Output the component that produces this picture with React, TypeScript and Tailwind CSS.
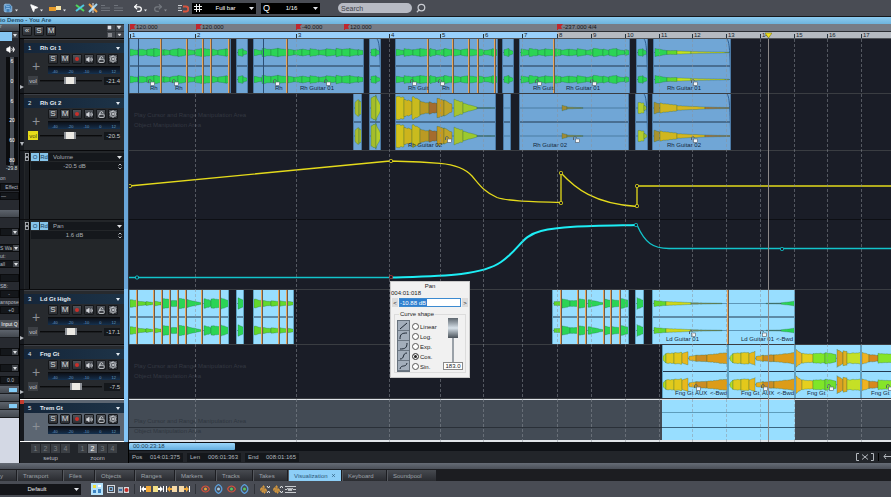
import React from "react";
import { Save, MousePointer2, Undo2, Redo2, Search, Volume2, LockOpen, Settings, X } from "lucide-react";

type Seg = [number, number, number, number, string];
type Label = [number, string];
type Clip = { from: number; to: number; segs?: Seg[]; cuts?: number[]; splits?: number[]; labels?: Label[]; locks?: number[]; fade?: boolean };

const START = 129;
const GREEN = "#2bd455";
const LIME = "#62d82c";
const BARS = [195, 296, 389, 440, 483, 522, 557, 591, 625, 659, 692, 726, 760, 794, 827, 861];

const noise = (n: number) => {
  const v = Math.sin(n * 12.9898) * 43758.5453;
  return v - Math.floor(v);
};

/* A run of short plucked notes filling the given span. */
function plucks(from: number, to: number): Seg[] {
  const out: Seg[] = [];
  const lengths = [8, 9, 7, 10, 6, 8];
  let x = from;
  let i = 0;
  while (x < to) {
    const end = Math.min(to, x + lengths[i % lengths.length]);
    const peak = 3.2 + noise(from + i) * 1.2;
    if (i % 3 === 2) out.push([x, end, peak - 1.2, peak, GREEN]);
    else out.push([x, end, peak, peak - 1.3, GREEN]);
    x = end;
    i++;
  }
  return out;
}

const single = (x: number): Seg[] => [[x, x + 5, 3, 4, GREEN], [x + 5, x + 10, 3, 1, GREEN]];

const fingered = (x: number): Seg[] => [
  [x, x + 3, 2, 5, "#b5dc22"], [x + 3, x + 11, 5, 5.5, "#e0cb1c"], [x + 11, x + 19, 5.5, 6, "#e3c81b"],
  [x + 19, x + 25, 5, 7, "#e8b81c"], [x + 26, x + 33, 2, 3, "#e8ae1c"], [x + 33, x + 44, 3, 3.5, "#cc8d22"],
  [x + 44, x + 66, 3.5, 6, "#dd9c18"],
];

const TRACK1: Clip[] = [
  { from: 129, to: 231, segs: plucks(129, 229), splits: [137], cuts: [160, 186, 202, 210, 228], labels: [[149, "Rh"], [174, "Rh"]], locks: [150, 174] },
  { from: 236, to: 248, segs: single(237) },
  { from: 253, to: 364, segs: plucks(253, 362), splits: [262], cuts: [286], labels: [[274, "Rh"], [299, "Rh Guitar 01"]], locks: [275, 326] },
  { from: 369, to: 381, segs: single(370), fade: true },
  { from: 395, to: 498, segs: plucks(395, 496), cuts: [427, 452, 468, 477, 494], labels: [[407, "Rh Guit"], [441, "Rh"]], locks: [412, 440] },
  { from: 502, to: 514, segs: single(503) },
  { from: 519, to: 630, segs: plucks(520, 628), cuts: [553], labels: [[532, "Rh Guit"], [565, "Rh Guitar 01"]], locks: [537, 592] },
  { from: 636, to: 648, segs: single(637), fade: true },
  { from: 653, to: 731, segs: [[654, 666, 4, 2, GREEN], [666, 676, 2, 2, LIME], [676, 690, 1.6, 1.2, "#c5e31c"], [690, 728, 1, 0.3, "#c9d426"]], labels: [[666, "Rh Guitar 01"]], locks: [693], fade: true },
];

const TRACK2: Clip[] = [
  { from: 353, to: 362, segs: [[354, 358, 6, 9, "#a9bd30"], [358, 362, 8, 5, "#9fb832"]] },
  { from: 369, to: 381, segs: [[370, 375, 10, 13, "#a4bd2c"], [375, 380, 12, 2, "#b3cc2a"]] },
  {
    from: 395, to: 496,
    segs: [[395, 403, 12, 11, "#d2c21c"], [403, 411, 9, 7, "#cdb41d"], [411, 419, 12, 8, "#c9bb1e"], [419, 428, 7, 5, "#bb9a24"], [428, 436, 6, 5, "#a56c2e"], [436, 443, 10, 8, "#c39a22"], [443, 451, 8, 4, "#bfa428"], [453, 462, 9, 6, "#a8c32e"], [462, 476, 5, 1, "#9cc92e"], [476, 495, 0.6, 0.3, "#5d7f8f"]],
    labels: [[407, "Rh Guitar 02"]], locks: [447],
  },
  { from: 503, to: 511 },
  { from: 519, to: 629, segs: [[561, 566, 3, 1.5, "#a08a35"], [566, 582, 1, 0.3, "#8d8a4a"]], labels: [[532, "Rh Guitar 02"]], locks: [575] },
  { from: 635, to: 648, segs: [[637, 643, 6, 5, "#b4cc2e"], [643, 646, 3, 1, "#a3c22e"]], fade: true },
  { from: 652, to: 731, segs: [[653, 659, 6, 4, "#a8922f"], [659, 676, 5, 3, "#d0b61f"], [676, 704, 2.4, 1, "#d4b520"], [704, 730, 1, 0.4, "#a87840"]], labels: [[666, "Rh Guitar 02"]], locks: [693], fade: true },
];

const TRACK3: Clip[] = [
  {
    from: 129, to: 229,
    segs: [[129, 136, 4, 3, LIME], [136, 145, 2.5, 1.5, LIME], [145, 153, 2, 1, LIME], [153, 160, 2.4, 1.5, LIME], [161, 169, 5.5, 4, GREEN], [170, 176, 3, 3, GREEN], [177, 186, 5.5, 4, GREEN], [186, 201, 4, 0.6, GREEN], [203, 210, 5, 3, GREEN], [210, 219, 5, 4, GREEN], [219, 228, 6, 3, GREEN]],
    cuts: [136, 153, 161, 169, 177, 185, 201, 219],
  },
  { from: 236, to: 244, segs: [[237, 243, 6, 3, GREEN]] },
  { from: 253, to: 294, segs: [[253, 261, 4.5, 3, LIME], [262, 270, 3, 2, LIME], [270, 278, 3, 2, LIME], [279, 286, 3, 1.6, LIME], [286, 294, 2.6, 1, LIME]], cuts: [261, 278, 286] },
  {
    from: 552, to: 629,
    segs: [[553, 560, 2, 2, LIME], [561, 569, 5, 3, GREEN], [569, 577, 3, 3, GREEN], [577, 585, 5, 4, GREEN], [587, 602, 4, 0.8, GREEN], [603, 610, 5, 3, GREEN], [610, 619, 4, 3, GREEN], [619, 628, 6, 3, GREEN]],
    cuts: [560, 577, 585, 603, 610, 619],
  },
  { from: 635, to: 644, segs: [[636, 643, 6, 3, GREEN]] },
  {
    from: 652, to: 795,
    segs: [[653, 665, 3, 2, LIME], [665, 690, 2, 1, "#cfd81c"], [690, 721, 0.8, 0.3, "#7d8d60"], [765, 780, 0.3, 0.6, "#4e7a80"], [780, 794, 0.8, 2.4, GREEN]],
    cuts: [727], labels: [[665, "Ld Guitar 01"], [740, "Ld Guitar 01"], [775, "<-Bwd"]], locks: [691, 762],
  },
];

const TRACK4: Clip[] = [
  { from: 662, to: 728, segs: fingered(662), labels: [[674, "Fng Gt"], [694, "AUX"], [709, "<-Bwd"]], locks: [696] },
  { from: 728, to: 795, segs: fingered(729), labels: [[740, "Fng Gt"], [761, "AUX"], [776, "<-Bwd"]], locks: [763] },
  {
    from: 795, to: 861, cuts: [860],
    segs: [[795, 801, 9, 5, "#f0b424"], [801, 812, 5, 4, "#e5cf1e"], [812, 824, 5, 5, "#7fe628"], [824, 835, 6, 4, "#6fe030"], [836, 842, 9, 6, "#dca022"], [842, 846, 8, 7, "#e0b020"], [846, 861, 5, 6, "#c5e026"]],
    labels: [[806, "Fng Gt"]], locks: [829],
  },
  {
    from: 861, to: 928,
    segs: [[861, 868, 6, 4, "#efb222"], [868, 877, 4, 3, "#d8881e"], [877, 900, 5, 4, "#86e42a"], [900, 928, 6, 5, "#dcb022"]],
    labels: [[870, "Fng Gt"]], locks: [888],
  },
];

function Wave({ clip, height }: { clip: Clip; height: number }) {
  const w = clip.to - clip.from;
  return (
    <svg className="absolute inset-0" width={w} height={height}>
      {[height / 4, (height * 3) / 4].map((cy) => (
        <g key={cy}>
          <line x1={0} x2={w} y1={cy} y2={cy} stroke="#24506f" strokeWidth="0.5" />
          {(clip.segs ?? []).map(([a, b, h0, h1, color], i) => {
            const top: string[] = [];
            const bottom: string[] = [];
            for (let x = a; x <= b; x++) {
              const h = (h0 + ((h1 - h0) * (x - a)) / (b - a)) * (0.88 + noise(x) * 0.16);
              top.push(`${x - clip.from},${(cy - h).toFixed(1)}`);
              bottom.unshift(`${x - clip.from},${(cy + h).toFixed(1)}`);
            }
            return <polygon key={i} points={[...top, ...bottom].join(" ")} fill={color} stroke="#1c5c3c" strokeOpacity="0.55" strokeWidth="0.5" />;
          })}
        </g>
      ))}
      <line x1={0} x2={w} y1={height / 2} y2={height / 2} stroke="#22384e" />
      {clip.fade && <path d={`M${w - 5} 0C${w - 2} 3 ${w - 2} 18 ${w - 1} ${height}`} fill="none" stroke="#2f5f92" />}
    </svg>
  );
}

function Lane({ clips, height, light, size, hint }: { clips: Clip[]; height: number; light?: boolean; size: string; hint?: boolean }) {
  return (
    <div className={`relative shrink-0 overflow-hidden border-b border-[#3a3d42] ${size}`}>
      {hint && <Hint color="text-[#343842]" />}
      {clips.map((c) => (
        <div
          key={c.from}
          className={`absolute inset-y-0 overflow-hidden border-x ${light ? "border-[#5fa3c4] bg-[#98deff]" : "border-[#4c7aa5] bg-[#70a6d6]"}`}
          style={{ left: c.from - START, width: c.to - c.from }}
        >
          <Wave clip={c} height={height} />
          {(c.splits ?? []).map((x) => (
            <i key={x} className="absolute inset-y-0 w-px bg-[#2d4f75]" style={{ left: x - c.from }} />
          ))}
          {(c.cuts ?? []).map((x) => (
            <i key={x} className="absolute inset-y-0 w-0.5 border-r border-[#6b5a4c] bg-[#e8a55c]" style={{ left: x - c.from - 1 }} />
          ))}
          {(c.labels ?? []).map(([x, t]) => (
            <span key={x} className="absolute bottom-px text-[6px] leading-[7px] whitespace-nowrap text-[#13283c]" style={{ left: x - c.from }}>{t}</span>
          ))}
          {(c.locks ?? []).map((x) => (
            <svg key={x} className="absolute bottom-[7px]" style={{ left: x - c.from - 3 }} width="7" height="7">
              <path d="M0.5 4V2C0.5 0 3 0 3.5 2" fill="none" stroke="#55606a" />
              <rect x="2.5" y="3" width="4" height="3.5" fill="#f4f6f8" stroke="#4d5a68" strokeWidth="0.6" />
            </svg>
          ))}
        </div>
      ))}
    </div>
  );
}

function Hint({ color }: { color: string }) {
  return (
    <div className={`flex flex-col gap-0.5 px-[5px] pt-[17px] text-[6px] leading-2 ${color}`}>
      <span>Play Cursor and Range Manipulation Area</span>
      <span>Object Manipulation Area</span>
    </div>
  );
}

function Node({ x, y, color }: { x: number; y: number; color: string }) {
  return <rect x={x - START - 1.5} y={y - 1.5} width="3" height="3" rx="1" fill="#1a1d27" stroke={color} />;
}

const mini = "flex h-2.5 w-2.5 items-center justify-center rounded-[1px] border border-[#15171a] bg-linear-to-b from-[#50545a] to-[#2c2f34] text-[8px] leading-none text-[#d5d8dc]";

function TrackHeader({ n, name, volume, pos, size, yellow, selected, open }: { n: number; name: string; volume?: string; pos?: number; size: string; yellow?: boolean; selected?: boolean; open?: boolean }) {
  return (
    <div className={`flex shrink-0 border-b ${size} ${selected ? "border-y border-white" : "border-[#08090b]"}`}>
      <div className="flex w-1 flex-col justify-end bg-[#16191e] pb-1">
        {!selected && (
          <svg width="4" height="4" fill="#b4b8be">{open ? <path d="M0 0H4L2 4Z" /> : <path d="M0 0L4 2L0 4Z" />}</svg>
        )}
        {selected && <i className="mb-auto h-1 w-1 bg-[#c23b2e]" />}
      </div>
      <div className={`flex min-w-0 flex-1 flex-col pt-[3px] ${selected ? "bg-[#5c6672]" : "border-t border-[#3c3f45] bg-[#272a2e]"}`}>
        <div className="flex h-2.5 items-center bg-linear-to-r from-[#15263a] to-[#1d3347] pr-1 pl-1 text-[6px] leading-none text-[#e4ebf2]">
          <span className="w-3">{n}</span>
          <span className="flex-1 font-bold">{name}</span>
          <svg width="4" height="3" fill="#e4ebf2"><path d="M0 0H4L2 3Z" /></svg>
        </div>
        <div className="flex">
          <button aria-label={`Add to ${name}`} className="w-6 pt-1 text-[14px] leading-none text-[#8b9096]">+</button>
          <div className="flex flex-1 flex-col gap-0.5 pt-px pr-1">
            <div className="flex gap-0.5">
              <button className={mini}>S</button>
              <button className={mini}>M</button>
              <button aria-label="Record" className={mini}><i className="h-1 w-1 rounded-full bg-[#c92f2a]" /></button>
              <button aria-label="Monitor" className={mini}><Volume2 size={7} fill="currentColor" /></button>
              <button aria-label="Lock" className={mini}><LockOpen size={7} strokeWidth={3} /></button>
              <button aria-label="Track settings" className={mini}><Settings size={8} strokeWidth={3} /></button>
            </div>
            <div className="flex h-2 items-end justify-between border-t border-[#0a0b0d] bg-linear-to-b from-[#0c1018] to-[#14304e] px-1 text-[4px] leading-[4px] text-[#6b9cc4]">
              <span>-40</span><span>-20</span><span>-10</span><span>0</span><span>12</span>
            </div>
          </div>
        </div>
        {volume && (
          <div className="flex items-center gap-0.5 pt-0.5 pr-1 pl-1 text-[6px] leading-none">
            <button className={`h-[9px] w-2.5 ${yellow ? "bg-[#e6dc1a] text-[#4b4710]" : "bg-[#3c3f44] text-[#c5c8cc]"}`}>vol</button>
            <input
              type="range" aria-label={`${name} volume`} defaultValue={pos}
              className="h-2 min-w-0 flex-1 appearance-none bg-linear-to-b from-transparent from-35% via-black via-36% to-transparent to-65% [&::-webkit-slider-thumb]:h-[7px] [&::-webkit-slider-thumb]:w-3 [&::-webkit-slider-thumb]:appearance-none [&::-webkit-slider-thumb]:border-x-2 [&::-webkit-slider-thumb]:border-[#8d9197] [&::-webkit-slider-thumb]:bg-[#eceae4]"
            />
            <span className="w-4 bg-[#14171b] py-px text-right text-[#c9ccd0]">{volume}</span>
          </div>
        )}
      </div>
    </div>
  );
}

function AutomationHeader({ name, value, size }: { name: string; value: string; size: string }) {
  return (
    <div className={`flex shrink-0 gap-px border-b border-[#0b0c0e] bg-[#232629] text-[6px] leading-none text-[#a9adb3] ${size}`}>
      <div className="w-1 bg-[#16191e]" />
      <div className="w-[5px] border-r border-black bg-[#1b1e22] pt-0.5">
        <svg width="4" height="8" fill="none" stroke="#b9bdc2" strokeWidth="0.8"><rect x="0.5" y="0.5" width="3" height="3" /><rect x="0.5" y="4.5" width="3" height="3" /></svg>
      </div>
      <div className="flex min-w-0 flex-1 flex-col gap-px pt-0.5">
        <div className="flex h-2 gap-px">
          <button className="w-2 bg-[#85c4ea] text-[#17405e]">O</button>
          <button className="w-2 bg-[#85c4ea] text-[#17405e]">Rd</button>
          <div className="flex flex-1 items-center bg-[#15181c] pr-0.5">
            <select aria-label={`${name} lane parameter`} className="min-w-0 flex-1 appearance-none pl-1"><option>{name}</option></select>
            <svg width="5" height="3" fill="#e0e2e5"><path d="M0 0H5L2.5 3Z" /></svg>
          </div>
        </div>
        <div className="flex h-2 items-center bg-[#15181c] pr-0.5">
          <input aria-label={`${name} value`} defaultValue={value} className="min-w-0 flex-1 text-center" />
          <svg width="4" height="7" fill="none" stroke="#b9bdc2"><path d="M0.5 2.5L2 1L3.5 2.5M0.5 4.5L2 6L3.5 4.5" /></svg>
        </div>
      </div>
    </div>
  );
}

const box = "flex h-2 shrink-0 items-center justify-end border border-[#0c0d0f] bg-[#14171b]";
const bar = "h-2 shrink-0 border-b border-[#1a1c20] bg-linear-to-b from-[#5d636c] to-[#43484f]";

function Arrow() {
  return <span className="flex h-1.5 w-1.5 shrink-0 items-center justify-center bg-[#44484e]"><svg width="4" height="3" fill="#e0e2e5"><path d="M0 0H4L2 3Z" /></svg></span>;
}

function Inspector() {
  return (
    <aside className="flex w-5 shrink-0 flex-col overflow-hidden border-r border-black bg-[#272a30] text-[5px] leading-none whitespace-nowrap text-[#b9bdc3]">
      <div className={bar}>r</div>
      <div className="flex h-[9px] shrink-0"><i className="w-3 bg-[#86c6f2]" /><Arrow /></div>
      <div className="flex h-4 shrink-0 items-center justify-end pr-1 text-white"><Volume2 size={9} fill="currentColor" /></div>
      <div className="ml-1.5 flex h-[108px] w-3 shrink-0 flex-col items-center justify-between border-x-4 border-[#0b0c0e] bg-[#4b5058] py-0.5 text-white">
        <span>6</span><span>0</span><span>6</span><span>20</span><span>60</span><span>80</span>
      </div>
      <div className="h-[7px] shrink-0 pt-px pl-1.5 text-[#dfe2e6]">-29.8</div>
      <div className="h-[11px] shrink-0 pt-1">on</div>
      <div className={box}>Effect</div>
      <div className={`${box} mt-px`}><span className="w-full">—</span></div>
      <div className={`${bar} mt-2.5`} />
      <div className={`${box} mt-2.5`}><Arrow /></div>
      <div className="mt-2 flex h-2 shrink-0 items-center justify-between border-y border-[#0c0d0f] bg-[#14171b]">S Wa<Arrow /></div>
      <div className="h-2 shrink-0 pt-0.5">ut:</div>
      <div className="flex h-2 shrink-0 items-center justify-between border-y border-[#0c0d0f] bg-[#14171b]">all<Arrow /></div>
      <div className={`${box} mt-1.5`} />
      <div className="h-2 shrink-0 pt-0.5">SB:</div>
      <div className={`${box} pr-2`}>-</div>
      <div className="h-2 shrink-0 pt-0.5">anspose</div>
      <div className={`${box} pr-1`}>+0</div>
      <button className="mt-1.5 h-2 shrink-0 bg-[#4a4e55] text-white">Input Q</button>
      <div className={`${bar} mt-0.5`} />
      <div className={`${box} mt-2.5`}><Arrow /></div>
      <div className={`${box} mt-2`}><Arrow /></div>
      <div className={`${box} mt-1 pr-1`}>0.0</div>
      <div className={`${bar} mt-0.5 flex items-center justify-end pr-0.5`}><i className="h-1 w-2 bg-[#84ccf6]" /></div>
      <div className={bar} />
      <div className={`${bar} flex items-center justify-end pr-0.5`}><i className="h-1 w-2 bg-[#84ccf6]" /></div>
      <div className={bar} />
      <div className="flex-1 bg-[#d3d8e4]" />
    </aside>
  );
}

function TempoFlag({ x, label }: { x: number; label: string }) {
  return (
    <span className="absolute top-0 flex whitespace-nowrap text-[6px] leading-[7px] text-[#14171b]" style={{ left: x - START }}>
      <svg width="6" height="6"><path d="M0 0H6L4 2.500L5 5H1V6H0Z" fill="#c0272d" /></svg>
      {label}
    </span>
  );
}

const CURVES: [string, string, boolean][] = [
  ["Linear", "M2 8L9 2", false],
  ["Log.", "M2 8C2 3 4 2 9 2", false],
  ["Exp.", "M2 8C7 8 9 7 9 2", false],
  ["Cos.", "M2 8C7 8 4 2 9 2", true],
  ["Sin.", "M2 8C3 3 8 7 9 2", false],
];

function PanDialog() {
  return (
    <div role="dialog" aria-label="Pan" className="absolute top-[257px] left-[261px] z-20 flex h-[97px] w-20 flex-col border border-[#c9c9c9] bg-[#f1f1f1] text-[6px] leading-none text-[#222]">
      <div className="pt-px text-center leading-[7px]">Pan</div>
      <div className="leading-[7px]">004:01:018</div>
      <div className="mt-px flex h-[9px] justify-between gap-px px-px">
        <button aria-label="Decrease" className="w-1.5 bg-[#dcdcdc]">&lt;</button>
        <div className="flex flex-1 border border-[#3c8ad0] bg-white">
          <input aria-label="Pan value" defaultValue="-10.88 dB" className="w-[27px] bg-[#2f7fd0] text-white" />
        </div>
        <button aria-label="Increase" className="w-1.5 bg-[#dcdcdc]">&gt;</button>
      </div>
      <fieldset className="mx-[3px] mt-1 mb-1 flex min-h-0 flex-1 items-start border border-[#dcdcdc] pl-0.5">
        <legend className="ml-0.5 px-px leading-[7px]">Curve shape</legend>
        <div className="mt-0.5 flex flex-col border border-[#66717c]">
          {CURVES.map(([n, d]) => (
            <svg key={n} className="bg-[#a3aebb]" width="11" height="10"><path d={d} fill="none" stroke="#1d2733" /><path d="M0 9.500H11" stroke="#6b7682" /></svg>
          ))}
        </div>
        <div className="flex flex-1 flex-col gap-px pt-1 pl-0.5">
          {CURVES.map(([n, , on]) => (
            <label key={n} className="flex h-[9px] items-center gap-px">
              <input type="radio" name="curve" defaultChecked={on} className="h-[7px] w-[7px] appearance-none rounded-full border border-[#555] bg-white checked:bg-[#222] checked:shadow-[inset_0_0_0_1px_white]" />
              {n}
            </label>
          ))}
        </div>
        <div className="flex h-full w-6 flex-col items-center justify-between pb-1">
          <input
            type="range" aria-label="Curve amount" defaultValue={100}
            className="h-11 w-2.5 appearance-none bg-transparent [direction:rtl] [writing-mode:vertical-lr] [&::-webkit-slider-runnable-track]:bg-[linear-gradient(to_right,transparent_4px,#9aa1a8_4px,#9aa1a8_6px,transparent_6px)] [&::-webkit-slider-thumb]:h-5 [&::-webkit-slider-thumb]:w-2.5 [&::-webkit-slider-thumb]:appearance-none [&::-webkit-slider-thumb]:bg-linear-to-b [&::-webkit-slider-thumb]:from-[#5d666e] [&::-webkit-slider-thumb]:via-[#d8e2ea] [&::-webkit-slider-thumb]:to-[#4a5259]"
          />
          <input aria-label="Curve amount value" defaultValue="183.0" className="h-[9px] w-5 border border-[#8a8a8a] bg-white text-center" />
        </div>
      </fieldset>
    </div>
  );
}

function Timeline() {
  return (
    <section className="relative flex min-w-0 flex-1 flex-col overflow-hidden bg-[#1a1d27]">
      <div className="relative h-2 shrink-0 border-b border-[#2b2e33] bg-[#777c86]">
        <TempoFlag x={130} label="120.000" />
        <TempoFlag x={196} label="120.000" />
        <TempoFlag x={296} label="-40.000" />
        <TempoFlag x={344} label="120.000" />
        <TempoFlag x={557} label="-237.000 4/4" />
      </div>
      <div className="relative h-[7px] shrink-0 border-b border-[#4f5358] bg-[#b5bac1] text-[6px] leading-[7px] text-[#14222e]">
        <i className="absolute inset-y-0 left-0 w-[428px] bg-[#99d0fb]" />
        {[130, ...BARS].map((x, i) => (
          <span key={x} className="absolute top-0 h-full" style={{ left: x - START }}>
            <i className="absolute bottom-0 left-0 h-1 w-px bg-[#25323d]" />
            <span className="pl-0.5">{i + 1}</span>
          </span>
        ))}
        <svg className="absolute top-0 left-[636px] z-20" width="7" height="6"><path d="M0 1H7L3.500 6Z" fill="#efe21c" stroke="#6d6712" strokeWidth="0.5" /></svg>
      </div>
      <Lane clips={TRACK1} height={54} size="h-[55px]" />
      <Lane clips={TRACK2} height={56} size="h-[57px]" hint />
      <div className="h-[69px] shrink-0 border-b border-[#0d0f14]">
        <svg className="h-full w-full overflow-hidden" fill="none" stroke="#e4da1b">
          <g transform="translate(0 -151)">
            <path strokeWidth="1.300" d="M0 186L261 161L291 162L311 163.300C325 164.500 336 168 343 176S354 191 368 197.500C378 201 400 201.500 432 202.500V173C446 188 465 204 508 206.500V186H3000" />
            <Node x={130} y={186} color="#e4da1b" />
            <Node x={391} y={161} color="#e4da1b" />
            <Node x={561} y={203} color="#e4da1b" />
            <Node x={561} y={173} color="#e4da1b" />
            <Node x={637} y={206} color="#e4da1b" />
            <Node x={637} y={186} color="#e4da1b" />
          </g>
        </svg>
      </div>
      <div className="h-[70px] shrink-0 border-b border-[#3a3d42]">
        <svg className="h-full w-full overflow-hidden" fill="none" stroke="#12c4cb">
          <g transform="translate(0 -220)">
            <path strokeWidth="1.300" d="M0 277.500H262M508 225C516 243 524 248.500 540 248.500H3000" />
            <path stroke="#1deef5" strokeWidth="2" d="M262 277.500C310 276 352 276 372 262S392 236 412 231S460 226 508 225" />
            <Node x={137} y={277.5} color="#12c4cb" />
            <Node x={636} y={225} color="#12c4cb" />
            <Node x={782} y={249} color="#12c4cb" />
            <Node x={391} y={277} color="#b92b2b" />
          </g>
        </svg>
      </div>
      <Lane clips={TRACK3} height={54} size="h-[55px]" light />
      <Lane clips={TRACK4} height={53} size="h-[54px]" light hint />
      <div className="relative h-[43px] shrink-0 border-t border-b-2 border-[#dfe3e8] bg-[#434b55]">
        <Hint color="text-[#303740]" />
        <i className="absolute inset-x-0 top-[27px] h-px bg-[#2a3038]" />
        <div className="absolute inset-y-0 w-[133px] bg-[#98deff]" style={{ left: 662 - START }}>
          <i className="absolute inset-x-0 top-3 h-px bg-[#5d9dbb]" />
          <i className="absolute inset-x-0 top-[27px] h-px bg-[#3b6680]" />
        </div>
      </div>
      <div className="pointer-events-none absolute top-[15px] bottom-0 left-0 z-10 w-full">
        {BARS.map((x) => (
          <i key={x} className="absolute inset-y-0 border-l border-dashed border-[#8c929a]/50" style={{ left: x - START }} />
        ))}
        <i className="absolute inset-y-0 w-px bg-[#8e8a8a]" style={{ left: 768 - START }} />
      </div>
      <PanDialog />
    </section>
  );
}

function Digits({ name, active }: { name: string; active?: number }) {
  return (
    <div className="flex flex-col items-center gap-0.5 text-[6px] leading-none text-[#b7bbc0]">
      <div className="flex gap-px">
        {[1, 2, 3, 4].map((n) => (
          <button key={n} className={`h-[9px] w-[9px] text-[7px] ${n === active ? "bg-[#6b7078] text-white" : "bg-[#3b3f44] text-[#767b81]"}`}>{n}</button>
        ))}
      </div>
      {name}
    </div>
  );
}

function Caret({ w = 5 }: { w?: number }) {
  return <svg width={w} height="3" viewBox="0 0 5 3" className="shrink-0" fill="#e4e6ea"><path d="M0 0H5L2.500 3Z" /></svg>;
}

function TopBar() {
  return (
    <header className="flex h-[17px] shrink-0 items-center border-b border-[#16181c] bg-[#494c54] pl-[3px] text-[6px] leading-none text-white">
      <button aria-label="Save" className="text-[#9fc9ee]"><Save size={10} fill="#3f7fb8" /></button>
      <span className="w-4 pt-1 pl-0.5"><Caret w={3} /></span>
      <button aria-label="Pointer"><MousePointer2 size={10} fill="white" /></button>
      <span className="w-2.5 pt-1 pl-px"><Caret w={3} /></span>
      <button aria-label="Draw"><svg width="12" height="10"><path d="M0 4H7V8H0Z" fill="#e79a28" /><path d="M7 3H12V7H7Z" fill="#f6e3a6" /></svg></button>
      <span className="w-3.5 pt-1 pl-0.5"><Caret w={3} /></span>
      <button aria-label="Split" className="w-[13px]"><svg width="10" height="10" strokeWidth="2"><path d="M1 2L9 8" stroke="#4fd65b" /><path d="M1 8L9 2" stroke="#4fc8e0" /></svg></button>
      <button aria-label="Crossfade" className="w-[13px]"><svg width="10" height="10" strokeWidth="2"><path d="M1 1L9 9" stroke="#f0a040" /><path d="M1 9L9 1" stroke="#9fd6f2" /><path d="M5 0V10" stroke="#e8e8e8" strokeWidth="1" /></svg></button>
      {[0, 1].map((i) => (
        <button key={i} aria-label={i ? "Ungroup" : "Group"} className="w-[13px]"><svg width="9" height="10" stroke="#6f737b"><path d="M0 2.500H4M0 5H9M0 7.500H9" /></svg></button>
      ))}
      <button aria-label="Undo" className="ml-1.5"><Undo2 size={10} strokeWidth={3} /></button>
      <span className="w-2.5 pt-1 pl-px"><Caret w={3} /></span>
      <button aria-label="Redo" className="text-[#74787f]"><Redo2 size={10} strokeWidth={3} /></button>
      <span className="w-[15px] pt-1 pl-px opacity-40"><Caret w={3} /></span>
      <button aria-label="Snap" className="mr-[3px]">
        <svg width="11" height="9" fill="none"><path d="M0 1.500H4M0 4H3M0 6.500H4" stroke="#c9ccd0" /><path d="M5 2.500H8C11 2.500 11 7.500 8 7.500H5" stroke="#d8553f" strokeWidth="2" /></svg>
      </button>
      <div className="flex h-[11px] w-16 items-center bg-black px-0.5">
        <svg width="8" height="8" stroke="#f0f0f0"><path d="M2.500 0V8M5.500 0V8M0 2.500H8M0 5.500H8" /></svg>
        <select aria-label="Snap grid" className="min-w-0 flex-1 appearance-none text-center"><option>Full bar</option></select>
        <Caret />
      </div>
      <div className="ml-[5px] flex h-[11px] w-[59px] items-center bg-black px-0.5">
        <span className="text-[9px]">Q</span>
        <select aria-label="Quantize" className="min-w-0 flex-1 appearance-none text-center"><option>1/16</option></select>
        <Caret />
      </div>
      <input type="search" aria-label="Search" placeholder="Search" className="mr-1 ml-[18px] h-2.5 w-[74px] rounded-full bg-[#b7bac3] px-[3px] text-[7px] placeholder:text-[#3e424a]" />
      <button aria-label="Run search" className="text-[#c9ccd2]"><Search size={10} strokeWidth={3} className="-scale-x-100" /></button>
    </header>
  );
}

const TABS: [string, string][] = [
  ["Transport", "w-[45px]"], ["Files", "w-[31px]"], ["Objects", "w-[39px]"], ["Ranges", "w-[39px]"], ["Markers", "w-10"],
  ["Tracks", "w-9"], ["Takes", "w-[34px]"], ["Visualization", "w-[53px]"], ["Keyboard", "w-11"], ["Soundpool", "w-[49px]"],
];

function Sep() {
  return <i className="mx-[3px] h-2.5 w-px bg-[#2f3238]" />;
}

function JumpIcon({ a, b, flip }: { a: string; b: string; flip?: boolean }) {
  return (
    <svg width="11" height="8" className={flip ? "-scale-x-100" : ""}><rect y="1" width="1" height="6" fill="white" /><path d="M1 4L4 1V3H6V5H4V7Z" fill={a} /><rect x="6" y="1" width="5" height="6" fill={b} /></svg>
  );
}

function EyeIcon({ ring, dot, tall }: { ring: string; dot: string; tall?: boolean }) {
  return (
    <svg width="9" height="10" fill="none"><path d={tall ? "M4.500 0.500C9 3 9 7 4.500 9.500C0 7 0 3 4.500 0.500Z" : "M0.500 5C2.500 1 6.500 1 8.500 5C6.500 9 2.500 9 0.500 5Z"} stroke={ring} strokeWidth="1.200" /><circle cx="4.500" cy="5" r="1.500" fill={dot} /></svg>
  );
}

function WaveIcon({ up }: { up?: boolean }) {
  return (
    <svg width="10" height="9" fill="none"><path d="M0 5H1V3H2V7H3V1H4V8H5V4H6V6H7" stroke="#e8a23a" /><path d={up ? "M7 3L8.500 1L10 3M7 6L8.500 8L10 6" : "M7 1L8.500 3L10 1M7 8L8.500 6L10 8"} stroke="#eceef0" /></svg>
  );
}

export default function App() {
  return (
    <div className="flex min-h-screen w-full flex-col overflow-hidden bg-[#494c54] font-['Liberation_Sans',Arial,sans-serif]">
      <TopBar />
      <div className="h-[7px] shrink-0 bg-linear-to-b from-[#8ccbf0] to-[#6eb4de] text-[6px] leading-[7px] font-bold text-[#234c69]">io Demo - You Are</div>
      <main className="flex shrink-0">
        <Inspector />
        <div className="flex min-w-0 flex-1 flex-col">
          <div className="flex">
            <div className="flex w-[104px] shrink-0 flex-col bg-[#25282c]">
              <div className="flex h-[15px] shrink-0 items-center gap-0.5 border-b border-black bg-[#2c3035] pl-0.5">
                <button aria-label="Collapse" className={mini}>«</button>
                <button className={mini}>S</button>
                <button className={mini}>M</button>
                <div className="ml-auto grid grid-cols-2 gap-px">
                  {["M1 1H4V4H1Z", "M1 1H5L3 4Z", "M1 2H5M1 4H5M2 1V5M4 1V5", "M2 2H5L3.500 4Z"].map((d) => (
                    <svg key={d} width="8" height="6" className="bg-[#43474d]" fill="#dcdee2" stroke="#dcdee2" strokeWidth="0.5"><path d={d} /></svg>
                  ))}
                </div>
              </div>
              <TrackHeader n={1} name="Rh Gt 1" volume="-21.4" pos={47} size="h-[55px]" />
              <TrackHeader n={2} name="Rh Gt 2" volume="-20.5" pos={47} size="h-[57px]" yellow open />
              <AutomationHeader name="Volume" value="-20.5 dB" size="h-[69px]" />
              <AutomationHeader name="Pan" value="1.6 dB" size="h-[70px]" />
              <TrackHeader n={3} name="Ld Gt High" volume="-17.1" pos={50} size="h-[55px]" />
              <TrackHeader n={4} name="Fng Gt" volume="-7.5" pos={60} size="h-[54px]" />
              <TrackHeader n={5} name="Trem Gt" size="h-[43px]" selected />
            </div>
            <div className="w-[5px] shrink-0 border-r border-[#2a3440] bg-[#6aa6d8]">
              <div className="h-[265px]" />
              <div className="h-[153px] bg-[#84c6f8]" />
            </div>
            <Timeline />
          </div>
          <div className="flex h-[21px] shrink-0 bg-[#22252a]">
            <div className="flex w-[109px] shrink-0 justify-center gap-2 border-r border-black pt-0.5">
              <Digits name="setup" />
              <Digits name="zoom" active={2} />
            </div>
            <div className="flex min-w-0 flex-1 flex-col text-[6px] leading-none text-[#b3b8be]">
              <div className="h-[9px] bg-[#0e1116] py-px">
                <div className="h-[7px] w-[106px] rounded-[1px] bg-linear-to-b from-[#9ad6fb] to-[#65aede] pl-1 leading-[7px] text-[#1c3b52]">00:00:23:18</div>
              </div>
              <div className="flex flex-1 items-center gap-1">
                {[["Pos", "014:01:375"], ["Len", "006:01:363"], ["End", "008:01:165"]].map(([k, v]) => (
                  <div key={k} className="flex h-[9px] w-[54px] items-center justify-between bg-[#14171b] px-[3px]"><span>{k}</span><span>{v}</span></div>
                ))}
                <button aria-label="Zoom to fit" className="ml-auto"><svg width="18" height="8" fill="none" stroke="#b3b8be"><path d="M3 0.500H0.500V7.500H3M15 0.500H17.500V7.500H15M6 1.500L12 6.500M12 1.500L6 6.500" /></svg></button>
                <button aria-label="Scroll left" className="border-l border-black pl-1"><svg width="8" height="8" fill="none" stroke="#b3b8be"><path d="M3 1L1 3.500L3 6M1 3.500H8" /></svg></button>
              </div>
            </div>
          </div>
        </div>
      </main>
      <div className="h-1.5 shrink-0 bg-linear-to-b from-[#666c76] to-[#4a4f58]" />
      <nav className="flex h-3 shrink-0 gap-px bg-[#1c1d21] pt-px text-[6px] leading-none text-[#9da1a7]">
        <button className="w-4 bg-linear-to-b from-[#474a50] to-[#2a2c31] text-left">y</button>
        {TABS.map(([t, w]) => (
          <button key={t} className={`flex items-center justify-between border-l border-[#55585e] px-[5px] ${w} ${t === "Visualization" ? "bg-[#8dcff8] text-[#2b5878]" : "bg-linear-to-b from-[#474a50] to-[#2a2c31]"}`}>
            {t}
            {t === "Visualization" && <X size={5} strokeWidth={3} className="shrink-0" />}
          </button>
        ))}
      </nav>
      <footer className="flex flex-1 items-center gap-0.5 bg-[#494c54] text-[6px] text-[#e6e8eb]">
        <div className="flex h-[11px] w-[81px] items-center bg-[#141519] pr-0.5 leading-none">
          <select aria-label="Visualization preset" className="min-w-0 flex-1 appearance-none text-center"><option>Default</option></select>
          <Caret />
        </div>
        <button aria-label="Meter layout" className="ml-2 bg-[#b5e2fb] p-px"><svg width="10" height="10"><path d="M1 1H4V4H1Z" fill="#f0e040" /><path d="M1 6H4V9H1ZM6 5H9V9H6Z" fill="#3c84c4" /><path d="M6 1H9V3H6Z" fill="white" /></svg></button>
        <button aria-label="Frame" className="ml-0.5"><svg width="9" height="9" fill="none"><rect x="0.500" y="0.500" width="7" height="7" stroke="#d5d8dc" /><rect x="2.500" y="2.500" width="3" height="3" stroke="#7fb4e0" /></svg></button>
        <button aria-label="Record view"><svg width="11" height="8"><path d="M0 2H5V8H0Z" fill="#a8b3c0" /><path d="M6 2H11V8H6Z" fill="#d8dadd" /><circle cx="8.500" cy="5" r="2" fill="#c42c28" /><path d="M1 4H4V6H1Z" fill="#3a6ea5" /></svg></button>
        <Sep />
        <button aria-label="To start"><JumpIcon a="#fff" b="#f0a838" /></button>
        <button aria-label="To end"><JumpIcon a="#fff" b="#f2e088" flip /></button>
        <button aria-label="Previous edge"><JumpIcon a="#f0a838" b="#f5d9a8" /></button>
        <button aria-label="Next edge"><JumpIcon a="#f0a838" b="#f5d9a8" flip /></button>
        <Sep />
        <div className="flex gap-1">
          <button aria-label="Shrink horizontally"><EyeIcon ring="#d0503c" dot="#e8a23a" /></button>
          <button aria-label="Shrink vertically"><EyeIcon ring="#5b9fdc" dot="#a8c8e0" tall /></button>
          <button aria-label="Grow horizontally"><EyeIcon ring="#d0503c" dot="#58c860" /></button>
          <button aria-label="Grow vertically"><EyeIcon ring="#5b9fdc" dot="#58c860" tall /></button>
        </div>
        <Sep />
        <button aria-label="Smaller wave"><WaveIcon /></button>
        <button aria-label="Larger wave" className="ml-px"><WaveIcon up /></button>
        <button aria-label="Wave view"><svg width="11" height="9" fill="none" stroke="#c9ccd0"><path d="M0 1.500H11M0 7.500H11M0 4.500H2L3 3L4 6L5 3L6 6L7 3L8 4.500H11" /></svg></button>
      </footer>
    </div>
  );
}
